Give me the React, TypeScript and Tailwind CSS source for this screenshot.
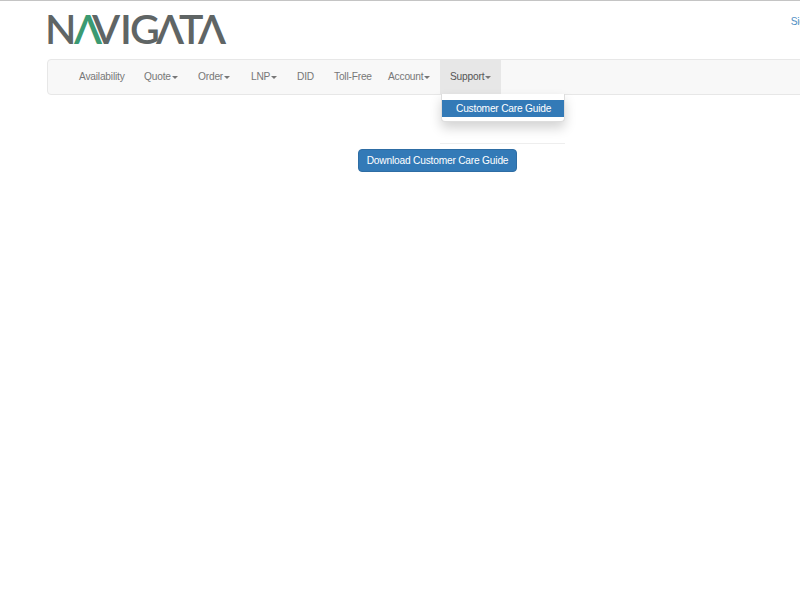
const navItems = [
  { label: 'Availability', className: 'w-[65px] pl-2.5' },
  { label: 'Quote', caret: true, className: 'w-[54px] pl-2.5' },
  { label: 'Order', caret: true, className: 'w-[53px] pl-2.5' },
  { label: 'LNP', caret: true, className: 'w-[46px] pl-2.5' },
  { label: 'DID', className: 'w-[37px] pl-2.5' },
  { label: 'Toll-Free', className: 'w-[60px] pl-2.5' },
  { label: 'Account', caret: true, className: 'w-[56px] pl-1' },
]

function Caret() {
  return <span className="ml-px inline-block h-0 w-0 border-x-[3px] border-t-[3px] border-x-transparent border-t-[#777] align-middle" />
}

function Logo() {
  return (
    <div aria-label="Navigata" className="-ml-[2px] flex h-[30px] items-center font-['Lato',sans-serif] text-[41px] leading-none font-semibold text-[#5f6565]">
      <span className="w-[30px]">N</span>
      <span className="w-[22px] -ml-[1px] text-[#3b9a72]">Λ</span>
      <span className="w-[27px] -ml-[4px]">V</span>
      <span className="ml-[1px] w-[10px]">I</span>
      <span className="w-[27px]">G</span>
      <span className="w-[23px] -ml-[1px]">Λ</span>
      <span className="w-[21px]">T</span>
      <span className="w-[26px] -ml-[2px]">Λ</span>
    </div>
  )
}

export default function App() {
  return (
    <div className="h-[600px] w-[800px] overflow-hidden border-t border-[#c4c4c4] bg-white font-['Liberation_Sans',Arial,sans-serif] text-[10.2px] tracking-[-0.2px]">
      <header className="flex h-[58px] items-start pl-[47px] pt-[12px]">
        <Logo />
        <a className="ml-auto -mr-[21px] mt-px text-[#4f8fc4]">Sign In</a>
      </header>

      <nav className="-mr-2 ml-[47px] flex h-[36px] rounded-l border border-[#e7e7e7] bg-[#f8f8f8] pl-[21px] text-[#777]">
        {navItems.map((item) => (
          <a key={item.label} className={`flex h-full items-center ${item.className}`}>
            {item.label}
            {item.caret && <Caret />}
          </a>
        ))}
        <div className="relative">
          <a className="flex h-full w-[61px] items-center bg-[#e7e7e7] pl-2.5 text-[#555]">
            Support
            <Caret />
          </a>
          <div className="absolute left-px top-full z-10 h-[28px] w-[124px] rounded-b border border-t-0 border-[#ddd] bg-white pt-[6px] shadow-[0_6px_12px_rgba(0,0,0,0.175)]">
            <a className="flex h-[17px] items-center bg-[#337ab7] pl-[14px] text-white">Customer Care Guide</a>
          </div>
        </div>
      </nav>

      <main>
        <hr className="ml-[440px] mt-[48px] w-[125px] border-[#eee]" />
        <button className="ml-[358px] mt-[5px] block h-[23px] w-[159px] rounded border border-[#2e6da4] bg-[#337ab7] text-white">
          Download Customer Care Guide
        </button>
      </main>
    </div>
  )
}
